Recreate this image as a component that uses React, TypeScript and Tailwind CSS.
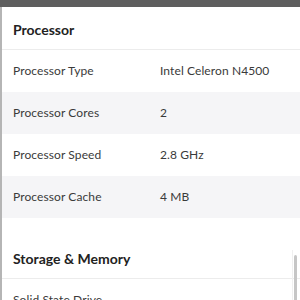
import React from "react";

type Spec = { label: string; value: string };

const processor: Spec[] = [
  { label: "Processor Type", value: "Intel Celeron N4500" },
  { label: "Processor Cores", value: "2" },
  { label: "Processor Speed", value: "2.8 GHz" },
  { label: "Processor Cache", value: "4 MB" },
];

function SpecRow({ spec, shaded }: { spec: Spec; shaded: boolean }) {
  return (
    <div className={`flex h-[42px] items-center px-[11px] text-[12px] tracking-[0.1px] text-[#3a3a3a] ${shaded ? "bg-[#f5f5f7]" : "bg-white"}`}>
      <span className="w-[147px]">{spec.label}</span>
      <span>{spec.value}</span>
    </div>
  );
}

export default function App() {
  return (
    <div className="relative h-[300px] w-[300px] overflow-hidden bg-white" style={{ fontFamily: "Lato, 'Noto Sans', sans-serif" }}>
      <div className="h-[7px] bg-[#5e5e5e]" />
      <div className="border-l-2 border-[#b5b5b5]">
        <div className="flex h-[43px] items-center border-b border-[#ececec] px-[11px] pt-[2px] text-[14px] font-bold text-[#222]">
          Processor
        </div>
        {processor.map((s, i) => (
          <SpecRow key={s.label} spec={s} shaded={i % 2 === 1} />
        ))}
        <div className="h-[21px]" />
        <div className="flex h-[40px] items-center border-b border-[#ececec] px-[11px] text-[14px] font-bold text-[#222]">
          Storage &amp; Memory
        </div>
        <div className="flex h-[42px] items-center px-[11px] text-[12px] tracking-[0.1px] text-[#3a3a3a]">
          <span className="w-[147px]">Solid State Drive</span>
        </div>
      </div>
      {/* scrollbar */}
      <div className="absolute right-[3px] top-[255px] h-[60px] w-[3px] rounded-full bg-[#c6c6c6]" />
      <div className="absolute right-[7px] top-[250px] h-[60px] w-px bg-[#f0f0f0]" />
    </div>
  );
}
